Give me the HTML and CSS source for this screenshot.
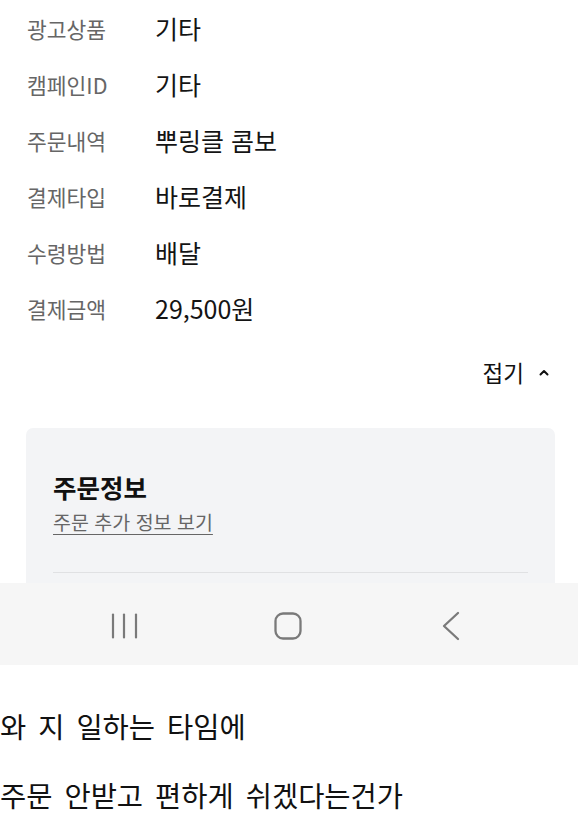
FILE: index.html
```html
<!DOCTYPE html>
<html lang="ko">
<head>
    <meta charset="UTF-8">
    <meta name="viewport" content="width=device-width, initial-scale=1.0">
    <title>주문 상세</title>
    <link rel="stylesheet" href="styles.css">
</head>
<body>

    <div class="screen">
        <div class="content">
            <!-- 주문 상세 항목 -->
            <dl class="info">
                <div class="row"><dt>광고상품</dt><dd>기타</dd></div>
                <div class="row"><dt>캠페인ID</dt><dd>기타</dd></div>
                <div class="row"><dt>주문내역</dt><dd>뿌링클 콤보</dd></div>
                <div class="row"><dt>결제타입</dt><dd>바로결제</dd></div>
                <div class="row"><dt>수령방법</dt><dd>배달</dd></div>
                <div class="row"><dt>결제금액</dt><dd>29,500원</dd></div>
            </dl>

            <div class="fold">
                <span>접기</span>
                <svg class="caret" width="10" height="7" viewBox="0 0 10 7">
                    <polyline points="1.5,5.5 5,2 8.5,5.5" fill="none" stroke="#111" stroke-width="2" stroke-linecap="round" stroke-linejoin="round"/>
                </svg>
            </div>

            <section class="card">
                <h2>주문정보</h2>
                <a href="#" class="more">주문 추가 정보 보기</a>
                <hr class="divider">
            </section>
        </div>

        <!-- 하단 내비게이션 바 -->
        <nav class="navbar">
            <div class="nav-item">
                <svg width="28" height="26" viewBox="0 0 28 26">
                    <line x1="2" y1="1.5" x2="2" y2="24.5" stroke="#7a7a7a" stroke-width="2.2" stroke-linecap="round"/>
                    <line x1="13" y1="1.5" x2="13" y2="24.5" stroke="#7a7a7a" stroke-width="2.2" stroke-linecap="round"/>
                    <line x1="25" y1="1.5" x2="25" y2="24.5" stroke="#7a7a7a" stroke-width="2.2" stroke-linecap="round"/>
                </svg>
            </div>
            <div class="nav-item">
                <svg width="28" height="28" viewBox="0 0 28 28">
                    <rect x="1.5" y="1.5" width="25" height="25" rx="7.5" fill="none" stroke="#7a7a7a" stroke-width="2.3"/>
                </svg>
            </div>
            <div class="nav-item">
                <svg width="18" height="30" viewBox="0 0 18 30">
                    <polyline points="16,2 2,15 16,28" fill="none" stroke="#7a7a7a" stroke-width="2.3" stroke-linecap="round" stroke-linejoin="round"/>
                </svg>
            </div>
        </nav>
    </div>

    <div class="post">
        <p>와 지 일하는 타임에</p>
        <p>주문 안받고 편하게 쉬겠다는건가</p>
    </div>

</body>
</html>
```

FILE: styles.css
```css
body {
    margin: 0;
    font-family: "Noto Sans CJK KR", "Noto Sans", sans-serif;
    background-color: #fff;
    color: #111;
}

.screen {
    width: 578px;
    display: flex;
    flex-direction: column;
}

.content {
    height: 583px;
    overflow: hidden;
}

.info {
    margin: 0;
    padding: 0 0 0 27px;
}

.row {
    display: grid;
    grid-template-columns: 128px 1fr;
    align-items: center;
    height: 56px;
}

.row dt {
    font-size: 21.5px;
    color: #666;
}

.row dd {
    margin: 0;
    font-size: 25px;
    color: #141414;
}

.fold {
    display: flex;
    justify-content: flex-end;
    align-items: center;
    gap: 15px;
    height: 40px;
    margin-top: 16px;
    padding-right: 29px;
    font-size: 22.5px;
    color: #111;
}

.caret {
    margin-top: 1px;
}

.card {
    margin: 36px 23px 0 26px;
    padding: 44px 27px 0;
    height: 300px;
    background-color: #f3f4f6;
    border-radius: 7px;
}

.card h2 {
    margin: 0;
    font-size: 25.5px;
    font-weight: bold;
    line-height: 30px;
    color: #111;
}

.more {
    display: inline-block;
    margin-top: 8px;
    font-size: 19.5px;
    line-height: 24px;
    color: #666;
    text-decoration: underline;
    text-underline-offset: 4px;
    text-decoration-thickness: 1px;
}

.divider {
    margin: 37px 0 0;
    border: none;
    border-top: 1px solid #e0e1e3;
}

.navbar {
    display: grid;
    grid-template-columns: repeat(3, 163px);
    height: 82px;
    padding-left: 43px;
    background-color: #f6f6f6;
}

.nav-item {
    display: flex;
    justify-content: center;
    align-items: center;
    padding-top: 4px;
}

.post {
    padding-top: 44px;
}

.post p {
    margin: 0 0 35px;
    font-size: 28.5px;
    line-height: 34px;
    word-spacing: 4px;
    color: #111;
}
```
